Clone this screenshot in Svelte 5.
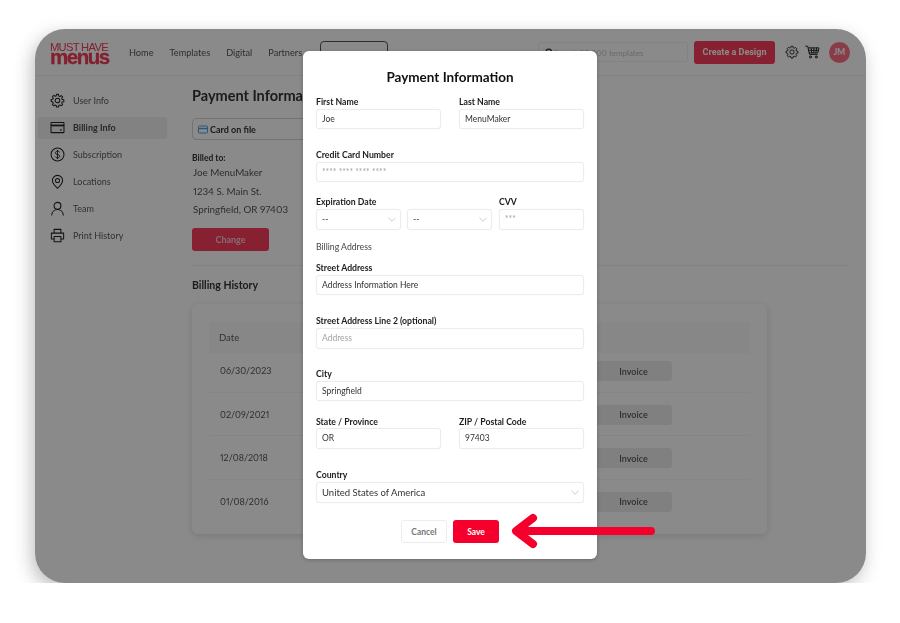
<script>
  const nav = ['Home', 'Templates', 'Digital', 'Partners'];
  const invoices = ['06/30/2023', '02/09/2021', '12/08/2018', '01/08/2016'];
  const gear =
    'M9.6 2h2.8l.5 2.4 1.5.7 2.1-1.3 2 2-1.3 2.1.7 1.5 2.4.5v2.8l-2.4.5-.7 1.5 1.3 2.1-2 2-2.1-1.3-1.5.7-.5 2.4H9.6l-.5-2.4-1.5-.7-2.1 1.3-2-2 1.3-2.1-.7-1.5L1.700 12.4V9.600l2.400-.5.7-1.500-1.300-2.100 2-2 2.100 1.300 1.500-.7z';
</script>

<div class="frame">
  <header class="topbar">
    <div class="logo">
      <span class="logo-top">MUST HAVE</span>
      <span class="logo-main">menus</span>
    </div>
    <nav class="nav">
      {#each nav as item}
        <span>{item}</span>
      {/each}
      <span class="nav-box"></span>
    </nav>
    <div class="search">
      <svg width="9" height="9" viewBox="0 0 12 12" fill="none" stroke="#333" stroke-width="1.6"><circle cx="5" cy="5" r="3.6" /><path d="M8 8l3 3" /></svg>
      <span>Search 20,000 templates</span>
    </div>
    <button class="create">Create a Design</button>
    <svg class="top-icon gear" width="14" height="14" viewBox="0 0 22 22" fill="none" stroke="#222" stroke-width="1.500" stroke-linejoin="round"><path d={gear} /><circle cx="11" cy="11" r="3.400" /></svg>
    <svg class="top-icon cart" width="15" height="14" viewBox="0 0 22 20" fill="none" stroke="#222" stroke-width="1.400" stroke-linejoin="round" stroke-linecap="round"><path d="M1 1.500h3l2.600 12h11.500M4.700 4h15.800l-1.800 7.300H6.200M9 4l.8 7.300M13 4v7.300M17 4l-1 7.300M5.400 7.600h14.300" /><circle cx="8" cy="17.300" r="1.500" /><circle cx="16.500" cy="17.300" r="1.500" /></svg>
    <div class="avatar">JM</div>
  </header>

  <div class="content">
    <aside class="sidebar">
      <div class="side-item">
        <svg width="15" height="15" viewBox="0 0 22 22" fill="none" stroke="#222" stroke-width="1.500" stroke-linejoin="round"><path d={gear} /><circle cx="11" cy="11" r="3.400" /></svg>
        <span>User Info</span>
      </div>
      <div class="side-item active">
        <svg width="15" height="15" viewBox="0 0 22 22" fill="none" stroke="#222" stroke-width="1.500"><rect x="1.500" y="3.500" width="19" height="15" rx="1" /><path d="M1.500 8h19" stroke-width="2.500" /><path d="M14.500 14.500h3" /></svg>
        <span>Billing Info</span>
      </div>
      <div class="side-item">
        <svg width="15" height="15" viewBox="0 0 22 22" fill="none" stroke="#222" stroke-width="1.500"><circle cx="11" cy="11" r="9.500" /><path d="M14.300 7.800c-.6-1.200-1.800-1.700-3.300-1.700-1.800 0-3.200.9-3.200 2.400 0 3.400 6.600 1.700 6.600 5 0 1.500-1.500 2.400-3.400 2.400-1.600 0-2.900-.6-3.500-1.900M11 4.300v13.400" stroke-width="1.300" /></svg>
        <span>Subscription</span>
      </div>
      <div class="side-item">
        <svg width="15" height="15" viewBox="0 0 22 22" fill="none" stroke="#222" stroke-width="1.500" stroke-linejoin="round"><path d="M11 21c-4-3.800-7.500-7.400-7.500-11.500a7.500 7.500 0 0 1 15 0C18.500 13.600 15 17.200 11 21z" /><circle cx="11" cy="9.500" r="3" /></svg>
        <span>Locations</span>
      </div>
      <div class="side-item">
        <svg width="15" height="15" viewBox="0 0 22 22" fill="none" stroke="#222" stroke-width="1.600" stroke-linecap="round"><circle cx="11" cy="7" r="5" /><path d="M2.500 20.500c.4-4.500 4-8 8.500-8s8.100 3.500 8.500 8" /></svg>
        <span>Team</span>
      </div>
      <div class="side-item">
        <svg width="15" height="15" viewBox="0 0 22 22" fill="none" stroke="#222" stroke-width="1.500" stroke-linejoin="round"><path d="M6 7V2h10v5M6 16H2V7.500h18V16h-4" /><rect x="6" y="12.500" width="10" height="7.500" /></svg>
        <span>Print History</span>
      </div>
    </aside>

    <main class="main">
      <h1>Payment Information</h1>
      <div class="card-on-file">
        <svg width="10" height="9" viewBox="0 0 10 9" fill="none" stroke="#4d9fe0" stroke-width="1"><rect x=".5" y="1" width="9" height="7" rx=".8" /><path d="M.5 3.500h9" stroke-width="1.400" /></svg>
        <span>Card on file</span>
      </div>
      <div class="billed-label">Billed to:</div>
      <div class="billed">Joe MenuMaker</div>
      <div class="billed">1234 S. Main St.</div>
      <div class="billed">Springfield, OR 97403</div>
      <button class="change">Change</button>
      <hr />
      <h2>Billing History</h2>
      <section class="history">
        <div class="history-head">Date</div>
        {#each invoices as date, i}
          <div class="history-row" class:last={i === invoices.length - 1}>
            <span>{date}</span>
            <button class="invoice">Invoice</button>
          </div>
        {/each}
      </section>
    </main>
  </div>

  <div class="overlay"></div>
</div>

<form class="modal" on:submit|preventDefault>
  <h3>Payment Information</h3>

  <div class="row two">
    <label>First Name<input value="Joe" /></label>
    <label>Last Name<input value="MenuMaker" /></label>
  </div>
  <label class="sp20">Credit Card Number<input placeholder="**** **** **** ****" /></label>
  <div class="row exp sp14">
    <div class="exp-date">
      <div class="label">Expiration Date</div>
      <div class="exp-selects">
        <div class="select">--<svg width="8" height="5" viewBox="0 0 9 5" fill="none" stroke="#c4c4c4"><path d="M.5.500l4 4 4-4" /></svg></div>
        <div class="select">--<svg width="8" height="5" viewBox="0 0 9 5" fill="none" stroke="#c4c4c4"><path d="M.5.500l4 4 4-4" /></svg></div>
      </div>
    </div>
    <label>CVV<input class="tall" placeholder="***" /></label>
  </div>
  <div class="section-note">Billing Address</div>
  <label class="sp8">Street Address<input value="Address Information Here" /></label>
  <label class="sp20">Street Address Line 2 (optional)<input class="tall" placeholder="Address" /></label>
  <label class="sp19">City<input value="Springfield" /></label>
  <div class="row two sp15">
    <label>State / Province<input class="tall flush" value="OR" /></label>
    <label>ZIP / Postal Code<input class="tall flush" value="97403" /></label>
  </div>
  <div class="sp20">
    <div class="label">Country</div>
    <div class="select country">United States of America<svg width="8" height="5" viewBox="0 0 9 5" fill="none" stroke="#c4c4c4"><path d="M.5.500l4 4 4-4" /></svg></div>
  </div>
  <div class="actions">
    <button type="button" class="cancel">Cancel</button>
    <button type="submit" class="save">Save</button>
  </div>
</form>

<svg class="arrow" width="150" height="36" viewBox="0 0 150 36" fill="none" stroke="#f5002d" stroke-width="8" stroke-linecap="round" stroke-linejoin="round">
  <path d="M143 18H10M25 5L8 18l17 13" />
</svg>

<style>
  :global(body) {
    background: #fff;
    font-family: 'Lato', 'Liberation Sans', sans-serif;
    font-variant-numeric: proportional-nums;
  }
  h1, h2, h3 {
    margin: 0;
  }
  button {
    font-family: inherit;
    border: 0;
    padding: 0;
  }
  .frame {
    position: relative;
    width: 831px;
    height: 554px;
    margin: 29px 0 0 35px;
    border-radius: 30px;
    overflow: hidden;
    background: #fff;
    box-shadow: -3px 6px 18px rgba(0, 0, 0, 0.26);
    color: #4d4d4d;
    font-size: 9.5px;
  }
  .overlay {
    position: absolute;
    inset: 0;
    background: rgba(0, 0, 0, 0.46);
  }

  .topbar {
    height: 46px;
    display: flex;
    align-items: center;
    padding: 0 16px 0 15px;
    border-bottom: 1px solid #f2f2f2;
    filter: blur(0.4px);
  }
  .logo {
    width: 60px;
    display: flex;
    flex-direction: column;
    color: #f23a55;
    font-family: 'Liberation Sans', sans-serif;
    margin-top: -1px;
  }
  .logo-top {
    margin-top: 3px;
    font-size: 11.200px;
    line-height: 9px;
    letter-spacing: -0.7px;
    white-space: nowrap;
  }
  .logo-main {
    margin-top: -3px;
    font-size: 20.500px;
    line-height: 15px;
    font-weight: 700;
    letter-spacing: -1.500px;
    -webkit-text-stroke: 0.3px #f23a55;
  }
  .nav {
    display: flex;
    align-items: center;
    gap: 16px;
    margin-left: 19px;
    font-size: 9.200px;
    color: #555;
  }
  .nav-box {
    width: 68px;
    height: 23px;
    box-sizing: border-box;
    margin-left: 2px;
    border: 1px solid #555;
    border-radius: 4px;
  }
  .search {
    width: 150px;
    height: 20px;
    box-sizing: border-box;
    display: flex;
    align-items: center;
    margin-left: auto;
    padding-left: 6px;
    border: 1px solid #f0f0f0;
    border-radius: 3px;
    color: #c4c4c4;
    font-size: 8px;
  }
  .search span {
    padding-top: 2px;
  }
  .create {
    width: 81px;
    height: 23px;
    margin-left: 6px;
    border-radius: 3px;
    background: #fa3b59;
    color: #fff;
    font-family: 'Roboto', sans-serif;
    font-size: 9px;
    font-weight: 700;
  }
  .top-icon.gear {
    margin-left: 10px;
  }
  .top-icon.cart {
    margin-left: 6px;
  }
  .avatar {
    width: 21px;
    height: 21px;
    margin-left: 9px;
    border-radius: 50%;
    background: #fd6f85;
    color: #fff;
    display: grid;
    place-items: center;
    font-size: 8.500px;
    font-weight: 700;
  }

  .content {
    display: flex;
    filter: blur(0.4px);
  }
  .sidebar {
    width: 157px;
    flex: none;
    padding-top: 13.500px;
    display: flex;
    flex-direction: column;
    gap: 5px;
  }
  .side-item {
    width: 129px;
    height: 22px;
    box-sizing: border-box;
    margin-left: 3px;
    padding-left: 12px;
    display: flex;
    align-items: center;
    gap: 8px;
    border-radius: 4px;
    font-size: 9px;
    color: #5c5c5c;
  }
  .side-item.active {
    background: #f0f0f0;
    font-weight: 700;
    color: #4a4a4a;
  }

  .main {
    flex: 1;
    padding: 12px 18px 0 0;
  }
  h1 {
    font-size: 14.500px;
    line-height: 16px;
    font-weight: 700;
    color: #333;
    white-space: nowrap;
  }
  .card-on-file {
    width: 130px;
    height: 22px;
    box-sizing: border-box;
    margin-top: 14px;
    padding-left: 5px;
    display: flex;
    align-items: center;
    gap: 2px;
    border: 1px solid #d4d4d4;
    border-radius: 4px;
    font-size: 9px;
    font-weight: 700;
    color: #333;
  }
  .billed-label {
    margin-top: 13px;
    font-size: 8.500px;
    line-height: 10px;
    font-weight: 700;
    color: #333;
  }
  .billed {
    padding-left: 1px;
    font-size: 9.800px;
    line-height: 18.500px;
    color: #555;
  }
  .change {
    display: block;
    width: 77px;
    height: 23px;
    margin-top: 9px;
    border-radius: 3px;
    background: #fa3b59;
    color: #f2c8cf;
    font-size: 9px;
    font-weight: 700;
  }
  hr {
    margin: 14px 0 0;
    border: 0;
    border-top: 1px solid #f0f0f0;
  }
  h2 {
    margin-top: 12px;
    font-size: 10.500px;
    line-height: 14px;
    font-weight: 700;
    color: #333;
  }
  .history {
    width: 575px;
    height: 230px;
    box-sizing: border-box;
    margin-top: 12px;
    padding: 18px 17px;
    border-radius: 6px;
    box-shadow: 0 2px 8px rgba(0, 0, 0, 0.14);
  }
  .history-head {
    height: 31px;
    margin-bottom: -3.500px;
    padding-left: 10px;
    display: flex;
    align-items: center;
    background: #f9f9f9;
    font-size: 9.500px;
    color: #5c5c5c;
  }
  .history-row {
    height: 43.500px;
    box-sizing: border-box;
    padding: 12px 78px 0 11px;
    display: flex;
    justify-content: space-between;
    font-size: 9px;
    color: #555;
    line-height: 20px;
    border-bottom: 1px solid #f6f6f6;
  }
  .history-row.last {
    border-bottom: 0;
  }
  .invoice {
    width: 90px;
    height: 20px;
    padding-left: 13px;
    border-radius: 3px;
    background: #ededed;
    color: #555;
    font-size: 9px;
    font-weight: 600;
  }

  .modal {
    position: absolute;
    left: 303px;
    top: 51px;
    width: 294px;
    height: 508px;
    box-sizing: border-box;
    padding: 45px 13px 0 13px;
    background: #fff;
    border-radius: 6px;
    box-shadow: 0 1px 4px rgba(0, 0, 0, 0.25);
    color: #1c1c1c;
    font-size: 8.700px;
    font-weight: 700;
  }
  h3 {
    position: absolute;
    left: 0;
    right: 0;
    top: 17px;
    text-align: center;
    font-size: 13.500px;
    line-height: 18px;
    color: #111;
  }
  label,
  .label {
    display: block;
    line-height: 12px;
  }
  label input,
  .select {
    display: block;
    width: 100%;
    height: 20px;
    box-sizing: border-box;
    margin-top: 1px;
    padding: 0 6px 1px 5px;
    border: 1px solid #ececec;
    border-radius: 3px;
    box-shadow: 0 0 2px rgba(0, 0, 0, 0.04);
    background: #fff;
    font-family: inherit;
    font-size: 8.500px;
    font-weight: 400;
    color: #333;
    outline: none;
  }
  label input.tall {
    height: 21px;
  }
  label input.flush {
    margin-top: 0;
  }
  label input::placeholder {
    color: #a2a2a2;
    opacity: 1;
  }
  .row.two {
    display: grid;
    grid-template-columns: 125px 125px;
    column-gap: 18px;
  }
  .row.exp {
    display: grid;
    grid-template-columns: 176px 85px;
    column-gap: 7px;
  }
  .exp-selects {
    display: grid;
    grid-template-columns: 85px 85px;
    column-gap: 6px;
  }
  .select {
    height: 21px;
    display: flex;
    align-items: center;
    justify-content: space-between;
    padding-right: 4px;
  }
  .select.country {
    height: 21px;
    font-size: 9.500px;
    color: #333;
  }
  .section-note {
    margin-top: 11px;
    line-height: 12px;
    font-weight: 400;
    color: #444;
  }
  .sp8 { margin-top: 9px; }
  .sp14 { margin-top: 14px; }
  .sp15 { margin-top: 15px; }
  .sp19 { margin-top: 19px; }
  .sp20 { margin-top: 20px; }
  .actions {
    display: flex;
    justify-content: center;
    gap: 6px;
    margin-top: 17px;
  }
  .actions button {
    width: 46px;
    height: 23px;
    border-radius: 3px;
    font-size: 8.500px;
    font-weight: 700;
  }
  .cancel {
    background: #fff;
    border: 1px solid #ececec;
    color: #777;
  }
  .save {
    background: #f5002d;
    color: #fff;
  }
  .arrow {
    position: absolute;
    left: 508px;
    top: 513px;
  }
</style>
